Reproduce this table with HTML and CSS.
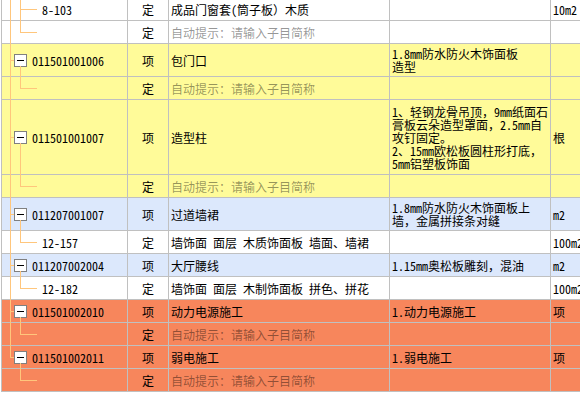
FILE: index.html
```html
<!DOCTYPE html>
<html lang="zh">
<head>
<meta charset="utf-8">
<link rel="stylesheet" href="styles.css">
</head>
<body>
<div class="grid">
  <div class="row white">
    <div class="c code child"><span class="ml"></span><span class="cv"></span><span class="ch"></span>8-103</div>
    <div class="c type">定</div>
    <div class="c name">成品门窗套(筒子板）木质</div>
    <div class="c desc"></div>
    <div class="c unit">10m2</div>
  </div>
  <div class="row white">
    <div class="c code child"><span class="ml"></span><span class="cv last"></span><span class="ch"></span></div>
    <div class="c type">定</div>
    <div class="c name hint">自动提示：请输入子目简称</div>
    <div class="c desc"></div>
    <div class="c unit"></div>
  </div>
  <div class="row yellow h33">
    <div class="c code"><span class="ml"></span><span class="stub"></span><span class="box"><span class="minus"></span></span><span class="bv"></span>011501001006</div>
    <div class="c type">项</div>
    <div class="c name">包门口</div>
    <div class="c desc">1.8mm防水防火木饰面板<br>造型</div>
    <div class="c unit"></div>
  </div>
  <div class="row yellow">
    <div class="c code child"><span class="ml"></span><span class="cv last"></span><span class="ch"></span></div>
    <div class="c type">定</div>
    <div class="c name hint">自动提示：请输入子目简称</div>
    <div class="c desc"></div>
    <div class="c unit"></div>
  </div>
  <div class="row yellow h75">
    <div class="c code"><span class="ml"></span><span class="stub"></span><span class="box"><span class="minus"></span></span><span class="bv"></span>011501001007</div>
    <div class="c type">项</div>
    <div class="c name">造型柱</div>
    <div class="c desc">1、轻钢龙骨吊顶，9mm纸面石<br>膏板云朵造型罩面，2.5mm自<br>攻钉固定。<br>2、15mm欧松板圆柱形打底，<br>5mm铝塑板饰面</div>
    <div class="c unit">根</div>
  </div>
  <div class="row yellow">
    <div class="c code child"><span class="ml"></span><span class="cv last"></span><span class="ch"></span></div>
    <div class="c type">定</div>
    <div class="c name hint">自动提示：请输入子目简称</div>
    <div class="c desc"></div>
    <div class="c unit"></div>
  </div>
  <div class="row blue h33">
    <div class="c code"><span class="ml"></span><span class="stub"></span><span class="box"><span class="minus"></span></span><span class="bv"></span>011207001007</div>
    <div class="c type">项</div>
    <div class="c name">过道墙裙</div>
    <div class="c desc">1.8mm防水防火木饰面板上<br>墙，金属拼接条对缝</div>
    <div class="c unit">m2</div>
  </div>
  <div class="row white">
    <div class="c code child"><span class="ml"></span><span class="cv last"></span><span class="ch"></span>12-157</div>
    <div class="c type">定</div>
    <div class="c name">墙饰面 面层 木质饰面板 墙面、墙裙</div>
    <div class="c desc"></div>
    <div class="c unit">100m2</div>
  </div>
  <div class="row blue">
    <div class="c code"><span class="ml"></span><span class="stub"></span><span class="box"><span class="minus"></span></span><span class="bv"></span>011207002004</div>
    <div class="c type">项</div>
    <div class="c name">大厅腰线</div>
    <div class="c desc">1.15mm奥松板雕刻，混油</div>
    <div class="c unit">m2</div>
  </div>
  <div class="row white">
    <div class="c code child"><span class="ml"></span><span class="cv last"></span><span class="ch"></span>12-182</div>
    <div class="c type">定</div>
    <div class="c name">墙饰面 面层 木制饰面板 拼色、拼花</div>
    <div class="c desc"></div>
    <div class="c unit">100m2</div>
  </div>
  <div class="row orange">
    <div class="c code"><span class="ml"></span><span class="stub"></span><span class="box"><span class="minus"></span></span><span class="bv"></span>011501002010</div>
    <div class="c type">项</div>
    <div class="c name">动力电源施工</div>
    <div class="c desc">1.动力电源施工</div>
    <div class="c unit">项</div>
  </div>
  <div class="row orange">
    <div class="c code child"><span class="ml"></span><span class="cv last"></span><span class="ch"></span></div>
    <div class="c type">定</div>
    <div class="c name hint">自动提示：请输入子目简称</div>
    <div class="c desc"></div>
    <div class="c unit"></div>
  </div>
  <div class="row orange">
    <div class="c code"><span class="ml last"></span><span class="stub"></span><span class="box"><span class="minus"></span></span><span class="bv"></span>011501002011</div>
    <div class="c type">项</div>
    <div class="c name">弱电施工</div>
    <div class="c desc">1.弱电施工</div>
    <div class="c unit">项</div>
  </div>
  <div class="row orange">
    <div class="c code child"><span class="cv last"></span><span class="ch"></span></div>
    <div class="c type">定</div>
    <div class="c name hint">自动提示：请输入子目简称</div>
    <div class="c desc"></div>
    <div class="c unit"></div>
  </div>
</div>
</body>
</html>
```
FILE: styles.css
```css
html, body {
  margin: 0;
  padding: 0;
  overflow: hidden;
  background: #ffffff;
}
body {
  width: 580px;
  height: 396px;
  font-family: "Noto Sans Mono CJK SC", "Noto Sans CJK SC", monospace;
  font-size: 12px;
  color: #000;
}
.grid {
  margin: -2px 0 0 1px;
  border-left: 1px solid #c0c0c0;
  width: 578px;
}
.row {
  display: grid;
  grid-template-columns: 126px 41px 221px 161px 29px;
  height: 23px;
}
.row.h33 { height: 33px; }
.row.h75 { height: 75px; }
.white { background: #ffffff; }
.yellow { background: #fffb99; }
.blue { background: #dce8fc; }
.orange { background: #f7865c; }
.c {
  box-sizing: border-box;
  border-right: 1px solid #c0c0c0;
  border-bottom: 1px solid #c0c0c0;
  display: flex;
  align-items: center;
  white-space: nowrap;
  overflow: hidden;
  line-height: 13px;
}
.c.unit { border-right: 0; padding-left: 2px; }
.c.type { justify-content: center; }
.c.name { padding-left: 2px; }
.c.desc { padding-left: 2px; }
.hint { color: rgba(0, 0, 0, 0.42); }
.c.code {
  position: relative;
  overflow: visible;
}
.c.code.child { padding-left: 40px; }
.ml {
  position: absolute;
  left: 8px;
  top: 0;
  bottom: -1px;
  width: 1px;
  background: #ffc67c;
}
.ml.last { bottom: auto; height: 50%; }
.cv {
  position: absolute;
  left: 18px;
  top: 0;
  bottom: -1px;
  width: 1px;
  background: #ffc67c;
}
.cv.last { bottom: auto; height: 50%; }
.ch {
  position: absolute;
  left: 18px;
  top: 50%;
  width: 17px;
  height: 1px;
  background: #ffc67c;
}
.stub {
  position: absolute;
  left: 8px;
  top: 50%;
  width: 4px;
  height: 1px;
  background: #ffc67c;
}
.bv {
  position: absolute;
  left: 18px;
  top: calc(50% + 6px);
  bottom: -1px;
  width: 1px;
  background: #ffc67c;
}
.box {
  box-sizing: border-box;
  width: 13px;
  height: 13px;
  margin: 0 5px 0 12px;
  border: 1px solid #808080;
  background: #ffffff;
  display: flex;
  align-items: center;
  justify-content: center;
  flex: none;
}
.minus {
  width: 7px;
  height: 1px;
  background: #000;
}
```
